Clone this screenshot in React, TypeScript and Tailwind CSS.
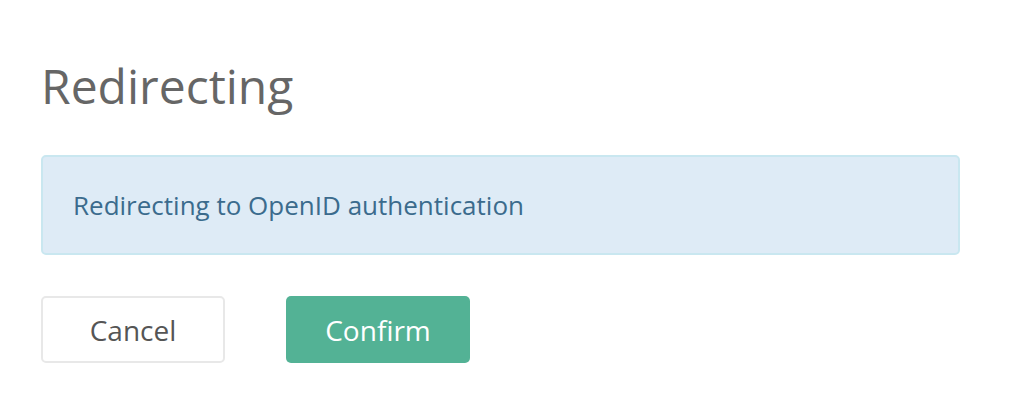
import React from "react";

export default function App() {
  return (
    <div className="w-[1012px] h-[416px] bg-white" style={{ fontFamily: '"Open Sans", sans-serif' }}>
      <div className="pl-[41px] pr-[52px] pt-[54px]">
        <h1 className="text-[48px] leading-[64px] text-[#666666] font-normal m-0">Redirecting</h1>
        <div className="mt-[37px] h-[100px] flex items-center pl-[30px] rounded-[5px] border-2 border-[#c9e7f0] bg-[#deebf6] text-[#3b6b8d] text-[26px]">
          Redirecting to OpenID authentication
        </div>
        <div className="mt-[41px] flex gap-[61px]">
          <button className="w-[184px] h-[67px] rounded-[5px] border-2 border-[#e8e8e8] bg-white text-[#555555] text-[28px]">Cancel</button>
          <button className="w-[184px] h-[67px] rounded-[5px] bg-[#53b295] text-white text-[28px]">Confirm</button>
        </div>
      </div>
    </div>
  );
}
